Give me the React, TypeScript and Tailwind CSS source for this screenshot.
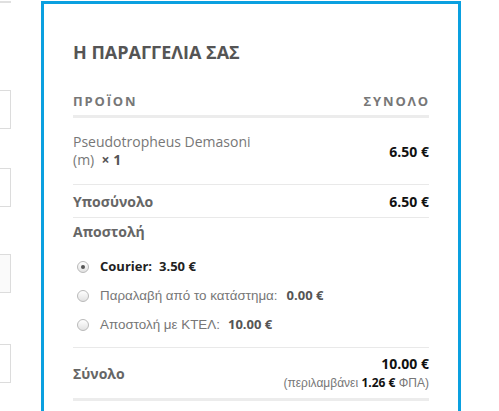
import React from "react";

const ARIAL = { fontFamily: '"Liberation Sans", Arial, sans-serif' };

function Radio({ checked }: { checked?: boolean }) {
  return (
    <span className="ml-[4px] mr-[11px] flex h-[12px] w-[12px] shrink-0 items-center justify-center rounded-full border border-[#b9b9b9] bg-gradient-to-b from-[#ffffff] to-[#e2e2e2]">
      {checked ? <span className="h-[4px] w-[4px] rounded-full bg-[#555]" /> : null}
    </span>
  );
}

export default function App() {
  return (
    <div
      className="flex h-[411px] w-[499px] overflow-hidden bg-white"
      style={{ fontFamily: '"Open Sans", "Noto Sans", sans-serif' }}
    >
      {/* left column of cut-off inputs */}
      <div className="flex w-[11px] shrink-0 flex-col">
        <div className="mt-[1px] h-[2px] w-[11px] bg-[#e0e0e0]" />
        <div className="mt-[87px] h-[39px] w-[11px] border-y border-r border-[#dcdcdc] bg-white" />
        <div className="mt-[39px] h-[39px] w-[11px] border-y border-r border-[#dcdcdc] bg-white" />
        <div className="mt-[47px] h-[39px] w-[11px] border-y border-r border-[#dcdcdc] bg-[#fafafa]" />
        <div className="mt-[51px] h-[39px] w-[11px] border-y border-r border-[#dcdcdc] bg-white" />
      </div>

      {/* order box */}
      <div className="ml-[30px] mt-[1px] h-[460px] w-[420px] shrink-0 border-[3px] border-[#0aa0e0] px-[29px] pt-[36px]">
        <h3 className="h-[24px] text-[18px] font-bold leading-[24px] text-[#555]">
          Η ΠΑΡΑΓΓΕΛΙΑ ΣΑΣ
        </h3>

        <div className="mt-[27px] flex h-[27px] items-start justify-between border-b-[3px] border-[#ececec] text-[13px] font-bold leading-[20px] tracking-[0.14em] text-[#777]">
          <span>ΠΡΟΪΟΝ</span>
          <span className="-mr-[1px]">ΣΥΝΟΛΟ</span>
        </div>

        <div className="flex h-[67px] items-center justify-between border-b border-[#e9e9e9]">
          <div className="text-[14px] leading-[18.5px] text-[#777]">
            <div>Pseudotropheus Demasoni</div>
            <div>
              (m)&nbsp; <strong className="font-bold text-[#555]">×&nbsp;1</strong>
            </div>
          </div>
          <span className="text-[14px] font-bold text-[#111]">6.50&nbsp;€</span>
        </div>

        <div className="flex h-[33px] items-center justify-between border-b border-[#e9e9e9] text-[14px] font-bold">
          <span className="text-[#666]">Υποσύνολο</span>
          <span className="text-[#111]">6.50&nbsp;€</span>
        </div>

        <div className="flex h-[130px] flex-col border-b border-[#e9e9e9] pt-[4px]">
          <div className="h-[20px] text-[14px] font-bold leading-[20px] text-[#666]">Αποστολή</div>
          <ul className="mt-[10.5px] flex flex-col text-[13px]">
            <li className="flex h-[29px] items-center">
              <Radio checked />
              <span className="font-bold text-[#222]">Courier:</span>
              <span className="ml-[7px] font-bold text-[#222]">3.50&nbsp;€</span>
            </li>
            <li className="flex h-[29px] items-center">
              <Radio />
              <span className="text-[13.4px] text-[#777]" style={ARIAL}>Παραλαβή από το κατάστημα:</span>
              <span className="ml-[9px] font-bold text-[#555]">0.00&nbsp;€</span>
            </li>
            <li className="flex h-[29px] items-center">
              <Radio />
              <span className="text-[13.4px] text-[#777]" style={ARIAL}>Αποστολή με ΚΤΕΛ:</span>
              <span className="ml-[8px] font-bold text-[#555]">10.00&nbsp;€</span>
            </li>
          </ul>
        </div>

        <div className="flex h-[53px] items-center justify-between border-b-[3px] border-[#ececec]">
          <span className="text-[14px] font-bold text-[#666]">Σύνολο</span>
          <div className="flex flex-col items-end">
            <span className="text-[14px] font-bold leading-[20px] text-[#111]">10.00&nbsp;€</span>
            <span className="text-[12px] leading-[18px] text-[#777]">
              <span style={ARIAL}>(περιλαμβάνει </span>
              <strong className="font-bold text-[#111]">1.26&nbsp;€</strong>
              <span style={ARIAL}> ΦΠΑ)</span>
            </span>
          </div>
        </div>
      </div>
    </div>
  );
}
